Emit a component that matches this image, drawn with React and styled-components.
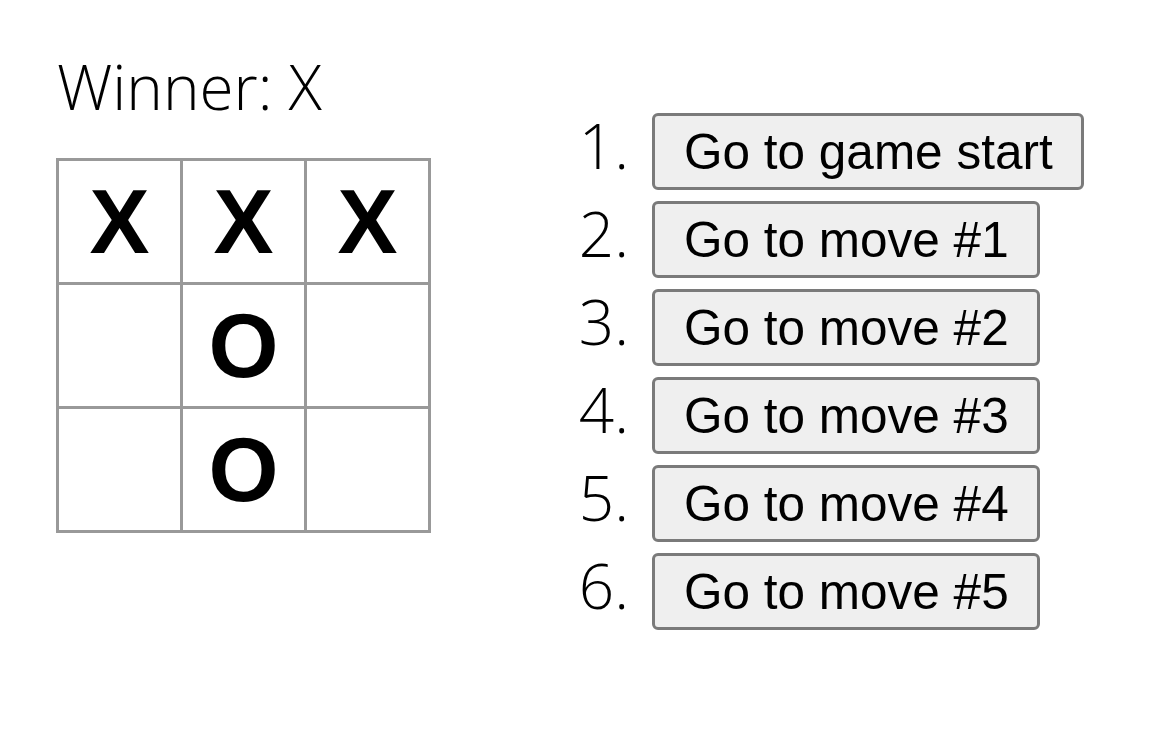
import React from "react";
import styled, { createGlobalStyle } from "styled-components";

const Global = createGlobalStyle`
  * { box-sizing: border-box; }
  html, body { margin: 0; padding: 0; background: #fff; }
  body { font-family: "Open Sans", "Noto Sans", sans-serif; color: #000; }
`;

const Page = styled.div`
  display: flex;
  flex-direction: row;
  align-items: flex-start;
  padding: 46px 0 0 56px;
`;

const BoardColumn = styled.div`
  display: flex;
  flex-direction: column;
`;

const Status = styled.div`
  font-family: "Open Sans", "Noto Sans", sans-serif;
  font-weight: 300;
  font-size: 62px;
  line-height: 80px;
  margin: 0 0 32px 1px;
`;

const Board = styled.div`
  display: grid;
  grid-template-columns: repeat(3, 121px);
  grid-auto-rows: 121px;
  gap: 3px;
  padding: 3px;
  background: #999;
  width: max-content;
`;

const Square = styled.button`
  all: unset;
  background: #fff;
  display: flex;
  align-items: center;
  justify-content: center;
  font-family: "Liberation Sans", Arial, sans-serif;
  font-weight: bold;
  font-size: 90px;
  line-height: 1;
  color: #000;
`;

const GameInfo = styled.div`
  margin: 67px 0 0 138px;
`;

const MoveList = styled.ol`
  list-style: none;
  margin: 0;
  padding: 0;
  display: flex;
  flex-direction: column;
  gap: 11px;
`;

const Move = styled.li`
  display: flex;
  align-items: baseline;
  gap: 23px;
`;

const Num = styled.span`
  width: 60px;
  text-align: right;
  font-family: "Open Sans", "Noto Sans", sans-serif;
  font-weight: 300;
  font-size: 62px;
  line-height: 56px;
`;

const MoveButton = styled.button`
  height: 77px;
  padding: 0 28px 0 29px;
  font-family: "Liberation Sans", Arial, sans-serif;
  font-size: 49.5px;
  line-height: 71px;
  color: #000;
  background: #efefef;
  border: 3px solid #7a7a7a;
  border-radius: 6px;
  white-space: nowrap;
  cursor: pointer;
`;

const squares = ["X", "X", "X", null, "O", null, null, "O", null];
const moves = [
  "Go to game start",
  "Go to move #1",
  "Go to move #2",
  "Go to move #3",
  "Go to move #4",
  "Go to move #5",
];

export default function App() {
  return (
    <>
      <Global />
      <Page>
        <BoardColumn>
          <Status>Winner: X</Status>
          <Board>
            {squares.map((v, i) => (
              <Square key={i}>{v}</Square>
            ))}
          </Board>
        </BoardColumn>
        <GameInfo>
          <MoveList>
            {moves.map((m, i) => (
              <Move key={i}>
                <Num>{i + 1}.</Num>
                <MoveButton>{m}</MoveButton>
              </Move>
            ))}
          </MoveList>
        </GameInfo>
      </Page>
    </>
  );
}
